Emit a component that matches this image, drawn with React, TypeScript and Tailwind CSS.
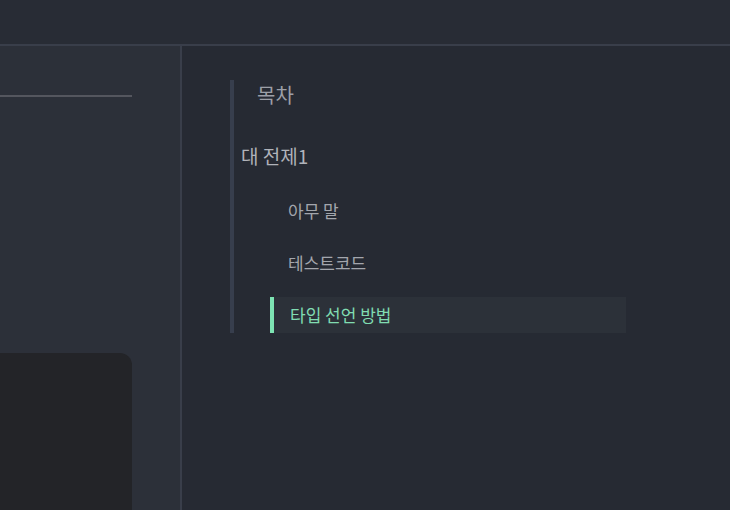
import React from 'react';

const items = [
  { id: 'a', label: '아무 말', active: false },
  { id: 'b', label: '테스트코드', active: false },
  { id: 'c', label: '타입 선언 방법', active: true },
];

const App: React.FC = () => {
  return (
    <div
      className="w-[730px] h-[510px] overflow-hidden flex flex-col bg-[#262a33]"
      style={{ fontFamily: '"Noto Sans CJK KR", "Noto Sans", sans-serif' }}
    >
      <header className="h-[46px] shrink-0 bg-[#282c35] border-b-2 border-[#393e4a]" />

      <div className="flex flex-1 min-h-0">
        <aside className="w-[182px] shrink-0 flex flex-col bg-[#2c3039] border-r-2 border-[#393e4a]">
          <div className="mt-[49px] w-[132px] h-[2px] bg-[#54565e]" />
          <div className="mt-auto w-[132px] h-[157px] bg-[#232428] rounded-tr-[12px]" />
        </aside>

        <main className="flex-1 pl-[48px] pt-[34px]">
          <nav className="w-[396px] h-[253px] border-l-4 border-[#373e4d] flex flex-col">
            <div className="h-[30px] pl-[23px] flex items-center text-[20px] text-[#9c9fa7]">
              목차
            </div>
            <div className="mt-[31px] h-[30px] pl-[7px] flex items-center text-[19px] text-[#b0b3ba]">
              대 전제1
            </div>
            <ul className="mt-[22px] flex flex-col gap-[16px]">
              {items.map((it) =>
                it.active ? (
                  <li
                    key={it.id}
                    className="ml-[36px] w-[356px] h-[36px] flex items-center pl-[16px] border-l-4 border-[#7de3b3] bg-[#2c3139] text-[17px] text-[#80dcb1]"
                  >
                    {it.label}
                  </li>
                ) : (
                  <li
                    key={it.id}
                    className="ml-[54px] h-[36px] flex items-center text-[17px] text-[#a3a6ad]"
                  >
                    {it.label}
                  </li>
                )
              )}
            </ul>
          </nav>
        </main>
      </div>
    </div>
  );
};

export default App;
